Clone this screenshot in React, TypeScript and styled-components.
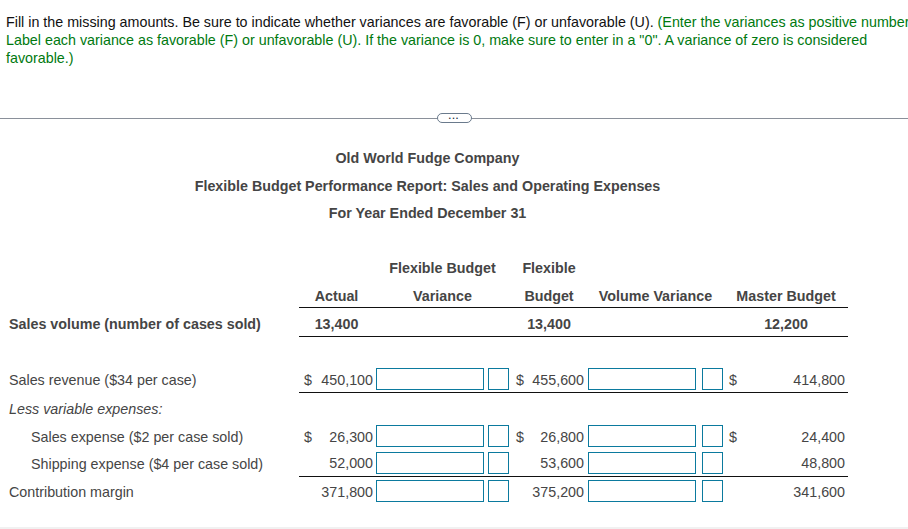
import React from "react";
import styled, { createGlobalStyle } from "styled-components";

const GlobalStyle = createGlobalStyle`
  html, body {
    margin: 0;
    padding: 0;
    background: #fff;
    overflow: hidden;
  }
  body {
    font-family: "Liberation Sans", Arial, sans-serif;
    font-size: 14.3px;
    color: #454545;
  }
`;

const Page = styled.div`
  width: 908px;
  height: 529px;
  position: relative;
  overflow: hidden;
`;

const Prompt = styled.p`
  margin: 0;
  padding: 13px 0 0 6px;
  height: 68px;
  line-height: 18px;
  color: #111;
  white-space: nowrap;
`;

const Hint = styled.span`
  color: #00790f;
`;

const Divider = styled.div`
  margin-top: 29px;
  height: 16px;
  display: flex;
  align-items: center;
  justify-content: center;
  background: linear-gradient(#8a909a, #8a909a) center / 100% 1px no-repeat;
`;

const MoreButton = styled.div`
  width: 33px;
  height: 8px;
  border: 1px solid #6a7a8c;
  border-radius: 5px;
  background: #fff;
  color: #1f3347;
  font-size: 9px;
  font-weight: bold;
  line-height: 5px;
  letter-spacing: 1.2px;
  text-align: center;
`;

const TitleBlock = styled.div`
  margin-top: 19px;
  width: 855px;
  text-align: center;
  font-weight: bold;
`;

const TitleLine = styled.div`
  height: 27.5px;
  line-height: 27.5px;
`;

const Report = styled.table`
  margin-top: 25px;
  border-collapse: collapse;
  table-layout: fixed;
  width: 848px;
`;

const Row = styled.tr<{ $h: number }>`
  height: ${(p) => p.$h}px;
`;

const Label = styled.td<{ $bold?: boolean; $italic?: boolean; $indent?: boolean; $drop?: number }>`
  padding: ${(p) => p.$drop ?? 0}px 0 0 ${(p) => (p.$indent ? 31 : 9)}px;
  font-weight: ${(p) => (p.$bold ? "bold" : "normal")};
  font-style: ${(p) => (p.$italic ? "italic" : "normal")};
  white-space: nowrap;
`;

const Head = styled.td<{ $rule?: boolean; $drop?: number; $nudge?: boolean }>`
  padding: ${(p) => p.$drop ?? 0}px ${(p) => (p.$nudge ? 2 : 0)}px 0 0;
  text-align: center;
  font-weight: bold;
  white-space: nowrap;
  border-bottom: ${(p) => (p.$rule ? "1.5px solid #111" : "none")};
`;

const Amount = styled.td<{ $rule?: boolean }>`
  padding: 1px 3px 0 5px;
  border-bottom: ${(p) => (p.$rule ? "1.5px solid #111" : "none")};
`;

const AmountInner = styled.div`
  display: flex;
  justify-content: space-between;
  white-space: nowrap;
`;

const Cell = styled.td<{ $rule?: boolean }>`
  padding: 0;
  border-bottom: ${(p) => (p.$rule ? "1.5px solid #111" : "none")};
`;

const CellInner = styled.div<{ $pad: number }>`
  display: flex;
  align-items: center;
  height: 22px;
  padding-left: ${(p) => p.$pad}px;
`;

const AmountBox = styled.input`
  box-sizing: border-box;
  width: 108px;
  height: 22px;
  margin: 0;
  padding: 0 2px;
  border: 1px solid #0b7a9e;
  background: #fff;
  outline: none;
`;

const FlagBox = styled(AmountBox)`
  width: 21px;
`;

const Footer = styled.div`
  position: absolute;
  left: 0;
  right: 0;
  bottom: 0;
  height: 2px;
  background: #f1f1f1;
`;

type Money = { sign?: boolean; value: string };

const MoneyCell = ({ sign, value, rule }: Money & { rule?: boolean }) => (
  <Amount $rule={rule}>
    <AmountInner>
      <span>{sign ? "$" : ""}</span>
      <span>{value}</span>
    </AmountInner>
  </Amount>
);

const EntryCell = ({ rule, second }: { rule?: boolean; second?: boolean }) => (
  <>
    <Cell $rule={rule}>
      <CellInner $pad={second ? 1 : 0}>
        <AmountBox />
      </CellInner>
    </Cell>
    <Cell $rule={rule}>
      <CellInner $pad={second ? 3 : 2}>
        <FlagBox />
      </CellInner>
    </Cell>
  </>
);

const rows = [
  {
    label: "Sales revenue ($34 per case)",
    h: 26,
    rule: true,
    sign: true,
    actual: "450,100",
    flex: "455,600",
    master: "414,800",
  },
  { label: "Less variable expenses:", h: 30, italic: true },
  {
    label: "Sales expense ($2 per case sold)",
    h: 27,
    indent: true,
    sign: true,
    actual: "26,300",
    flex: "26,800",
    master: "24,400",
  },
  {
    label: "Shipping expense ($4 per case sold)",
    h: 27,
    indent: true,
    rule: true,
    actual: "52,000",
    flex: "53,600",
    master: "48,800",
  },
  {
    label: "Contribution margin",
    h: 29,
    actual: "371,800",
    flex: "375,200",
    master: "341,600",
  },
];

export default function App() {
  return (
    <Page>
      <GlobalStyle />
      <Prompt>
        Fill in the missing amounts. Be sure to indicate whether variances are favorable (F) or unfavorable (U).{" "}
        <Hint>
          (Enter the variances as positive numbers.
          <br />
          Label each variance as favorable (F) or unfavorable (U). If the variance is 0, make sure to enter in a "0". A variance of zero is considered
          <br />
          favorable.)
        </Hint>
      </Prompt>
      <Divider>
        <MoreButton>...</MoreButton>
      </Divider>
      <TitleBlock>
        <TitleLine>Old World Fudge Company</TitleLine>
        <TitleLine>Flexible Budget Performance Report: Sales and Operating Expenses</TitleLine>
        <TitleLine>For Year Ended December 31</TitleLine>
      </TitleBlock>
      <Report>
        <colgroup>
          <col style={{ width: 299 }} />
          <col style={{ width: 77 }} />
          <col style={{ width: 110 }} />
          <col style={{ width: 25 }} />
          <col style={{ width: 76 }} />
          <col style={{ width: 112 }} />
          <col style={{ width: 25 }} />
          <col style={{ width: 124 }} />
        </colgroup>
        <tbody>
          <Row $h={28}>
            <Label />
            <Head $drop={2} />
            <Head $drop={2} $nudge colSpan={2}>Flexible Budget</Head>
            <Head $drop={2}>Flexible</Head>
            <Head colSpan={2} />
            <Head />
          </Row>
          <Row $h={27}>
            <Label />
            <Head $rule $drop={4} $nudge>Actual</Head>
            <Head $rule $drop={4} $nudge colSpan={2}>Variance</Head>
            <Head $rule $drop={4}>Budget</Head>
            <Head $rule $drop={4} colSpan={2}>Volume Variance</Head>
            <Head $rule $drop={4}>Master Budget</Head>
          </Row>
          <Row $h={29}>
            <Label $bold $drop={4}>Sales volume (number of cases sold)</Label>
            <Head $rule $drop={4} $nudge>13,400</Head>
            <Head $rule colSpan={2} />
            <Head $rule $drop={4}>13,400</Head>
            <Head $rule colSpan={2} />
            <Head $rule $drop={4}>12,200</Head>
          </Row>
          <Row $h={30}>
            <Label colSpan={8} />
          </Row>
          {rows.map((r) =>
            r.actual ? (
              <Row $h={r.h} key={r.label}>
                <Label $indent={r.indent} $drop={1}>{r.label}</Label>
                <MoneyCell sign={r.sign} value={r.actual} rule={r.rule} />
                <EntryCell rule={r.rule} />
                <MoneyCell sign={r.sign} value={r.flex!} rule={r.rule} />
                <EntryCell rule={r.rule} second />
                <MoneyCell sign={r.sign} value={r.master!} rule={r.rule} />
              </Row>
            ) : (
              <Row $h={r.h} key={r.label}>
                <Label $italic={r.italic} $drop={3} colSpan={8}>{r.label}</Label>
              </Row>
            ),
          )}
        </tbody>
      </Report>
      <Footer />
    </Page>
  );
}
